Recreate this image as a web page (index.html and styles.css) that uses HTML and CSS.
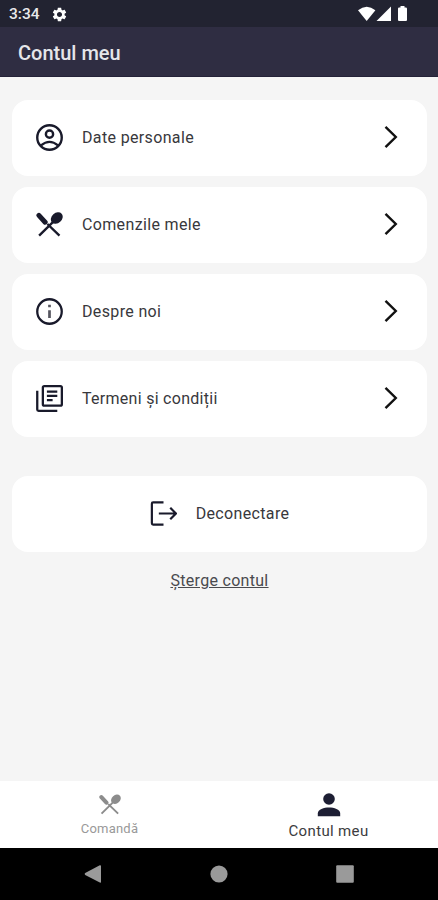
FILE: index.html
```
<!DOCTYPE html>
<html lang="ro">
  <head>
    <meta charset="UTF-8" />
    <title>Contul meu</title>
    <link rel="stylesheet" href="styles.css">
  </head>
  <body>
    <svg class="symbols">
      <symbol id="cutlery" viewBox="0 0 26 24">
        <path d="M2.8 3.2 L8.8 9.8" stroke="currentColor" stroke-width="4.8" stroke-linecap="round" />
        <path d="M3 22.8 L18 8 M11 11.5 L22.6 22.8" stroke="currentColor" stroke-width="2.3" fill="none" />
        <ellipse cx="20" cy="5.8" rx="6.3" ry="4.9" transform="rotate(-42 20 5.8)" fill="currentColor" />
      </symbol>
      <symbol id="chevron" viewBox="0 0 14 24">
        <path d="M1.5 1.8 L11.8 12 L1.5 22.2" stroke="currentColor" stroke-width="2.4" fill="none" />
      </symbol>
    </svg>

    <div class="status-bar">
      <span class="time">3:34</span>
      <svg class="gear" viewBox="0 0 24 24">
        <path d="M19.14 12.94c.04-.3.06-.61.06-.94 0-.32-.02-.64-.07-.94l2.03-1.58c.18-.14.23-.41.12-.61l-1.92-3.32c-.12-.22-.37-.29-.59-.22l-2.39.96c-.5-.38-1.03-.7-1.62-.94l-.36-2.54c-.04-.24-.24-.41-.48-.41h-3.84c-.24 0-.43.17-.47.41l-.36 2.54c-.59.24-1.13.57-1.62.94l-2.39-.96c-.22-.08-.47 0-.59.22L2.74 8.87c-.12.21-.08.47.12.61l2.03 1.58c-.05.3-.09.63-.09.94s.02.64.07.94l-2.03 1.58c-.18.14-.23.41-.12.61l1.92 3.32c.12.22.37.29.59.22l2.39-.96c.5.38 1.03.7 1.62.94l.36 2.54c.05.24.24.41.48.41h3.84c.24 0 .44-.17.47-.41l.36-2.54c.59-.24 1.13-.56 1.62-.94l2.39.96c.22.08.47 0 .59-.22l1.92-3.32c.12-.22.07-.47-.12-.61l-2.01-1.58zM12 15.6c-1.98 0-3.6-1.62-3.6-3.6s1.62-3.6 3.6-3.6 3.6 1.62 3.6 3.6-1.62 3.6-3.6 3.6z" />
      </svg>
      <svg class="signals" viewBox="0 0 52 18">
        <path d="M0 5.2 Q8.7 -1.8 17.4 5.2 L8.7 16 Z" />
        <path d="M33 1.5 V16 H18.5 Z" />
        <path d="M42.5 1 h4 v1.6 h1.4 q1.1 0 1.1 1.1 V15 q0 1.1 -1.1 1.1 h-6.8 q-1.1 0 -1.1 -1.1 V3.7 q0 -1.1 1.1 -1.1 h1.4 Z" />
      </svg>
    </div>

    <header class="header">
      <h1>Contul meu</h1>
    </header>

    <main class="content">
      <div class="card">
        <svg class="icon" viewBox="0 0 26 26">
          <g fill="none" stroke="currentColor" stroke-width="2.3">
            <circle cx="13" cy="13" r="11.8" />
            <circle cx="13" cy="9.8" r="3.5" />
            <path d="M4.8 20.6 Q13 13.8 21.2 20.6" />
          </g>
        </svg>
        <span>Date personale</span>
        <svg class="chevron"><use href="#chevron" /></svg>
      </div>
      <div class="card">
        <svg class="icon"><use href="#cutlery" /></svg>
        <span>Comenzile mele</span>
        <svg class="chevron"><use href="#chevron" /></svg>
      </div>
      <div class="card">
        <svg class="icon" viewBox="0 0 26 26">
          <circle cx="13" cy="13" r="11.8" fill="none" stroke="currentColor" stroke-width="2.2" />
          <path d="M13 6.5 V9 M13 11.8 V19.2" stroke="#55555f" stroke-width="2.6" />
        </svg>
        <span>Despre noi</span>
        <svg class="chevron"><use href="#chevron" /></svg>
      </div>
      <div class="card">
        <svg class="icon" viewBox="0 0 26 26">
          <g fill="none" stroke="currentColor" stroke-width="2.2">
            <rect x="6.6" y="1.1" width="18.3" height="18.8" rx="1.4" />
            <path d="M1.2 5.5 V23.6 Q1.2 24.9 2.5 24.9 H20.5" />
            <path d="M10.5 6.4 H20.5 M10.5 10.5 H20.5 M10.5 14.6 H16" />
          </g>
        </svg>
        <span class="terms">Termeni și condiții</span>
        <svg class="chevron"><use href="#chevron" /></svg>
      </div>

      <div class="card logout">
        <svg class="icon" viewBox="0 0 26 26">
          <g fill="none" stroke="currentColor" stroke-width="2.1">
            <path d="M13 2.3 H3 Q1.8 2.3 1.8 3.5 V22.5 Q1.8 23.7 3 23.7 H13" />
            <path d="M8.5 13 H25 M19.5 7.5 L25 13 L19.5 18.5" />
          </g>
        </svg>
        <span>Deconectare</span>
      </div>
      <a class="delete" href="#">Șterge contul</a>
    </main>

    <nav class="tabs">
      <div class="tab">
        <svg class="tab-cutlery"><use href="#cutlery" /></svg>
        <span>Comandă</span>
      </div>
      <div class="tab active">
        <svg class="tab-person" viewBox="0 0 24 24">
          <circle cx="12" cy="6" r="5.8" />
          <path d="M0.8 23.2 V20.5 C0.8 16.5 7 14.6 12 14.6 S23.2 16.5 23.2 20.5 V23.2 Z" />
        </svg>
        <span>Contul meu</span>
      </div>
    </nav>

    <div class="system-nav">
      <svg viewBox="0 0 18 18"><path d="M1.2 8 L15.8 0.2 Q17 0 17 1 V17 Q17 18 15.8 17.6 L1.2 10 Q0 9 1.2 8 Z" /></svg>
      <svg viewBox="0 0 18 18"><circle cx="9" cy="9" r="8.6" /></svg>
      <svg viewBox="0 0 18 18"><rect x="0.2" y="0.2" width="17.6" height="17.6" rx="1" /></svg>
    </div>
  </body>
</html>
```
FILE: styles.css
```
* {
  box-sizing: border-box;
}

body {
  font-family: Roboto, "Liberation Sans", sans-serif;
  background: #f5f5f5;
  margin: 0;
  height: 900px;
  display: flex;
  flex-direction: column;
  overflow: hidden;
}

svg {
  display: block;
  flex: none;
}

.symbols {
  position: absolute;
  width: 0;
  height: 0;
}

.status-bar {
  height: 27px;
  background: #222331;
  color: #e8e8ea;
  display: flex;
  align-items: center;
  padding: 1px 28px 0 9px;
}

.time {
  font-size: 15.5px;
  font-weight: 500;
  width: 42px;
}

.gear {
  width: 17px;
  height: 17px;
  fill: #fff;
}

.signals {
  width: 52px;
  height: 18px;
  margin-left: auto;
  fill: #fff;
}

.header {
  height: 50px;
  background: #2f2d42;
  border-bottom: 1px solid #242238;
  display: flex;
  align-items: center;
  padding: 2px 18px 0;
}

h1 {
  margin: 0;
  font-size: 20px;
  font-weight: 500;
  color: #e6e6ea;
}

.content {
  flex: 1;
  padding: 23px 11px 0 12px;
  display: flex;
  flex-direction: column;
  gap: 11px;
}

.card {
  height: 76px;
  background: #fff;
  border-radius: 16px;
  display: flex;
  align-items: center;
  padding: 0 29px 2px 24px;
  font-size: 16px;
  letter-spacing: 0.35px;
  color: #38383c;
}

.terms {
  letter-spacing: 0.28px;
}

.icon {
  width: 27px;
  height: 27px;
  margin-right: 19px;
  color: #191a2b;
}

.chevron {
  width: 14px;
  height: 24px;
  margin-left: auto;
  color: #111;
}

.logout {
  justify-content: center;
  margin-top: 28px;
  padding: 0 24px 2px;
}

.delete {
  align-self: center;
  margin-top: 8px;
  font-size: 16px;
  line-height: 20px;
  letter-spacing: 0.3px;
  color: #4a4a4e;
}

.tabs {
  height: 67px;
  background: #fff;
  display: flex;
}

.tab {
  flex: 1;
  display: flex;
  flex-direction: column;
  align-items: center;
  padding-top: 13px;
  font-size: 13px;
  letter-spacing: 0.2px;
  color: #999;
}

.tab.active {
  padding-top: 12px;
  font-size: 15px;
  letter-spacing: 0.35px;
  color: #3c3c40;
}

.tab-cutlery {
  width: 22px;
  height: 21px;
  margin-bottom: 6px;
  color: #8c8c8c;
}

.tab-person {
  width: 24px;
  height: 24px;
  margin-bottom: 5px;
  fill: #1d1e33;
}

.system-nav {
  height: 52px;
  background: #000;
  display: flex;
  justify-content: center;
  align-items: center;
  gap: 108px;
}

.system-nav svg {
  width: 18px;
  height: 18px;
  fill: #9a9a9a;
}
```
